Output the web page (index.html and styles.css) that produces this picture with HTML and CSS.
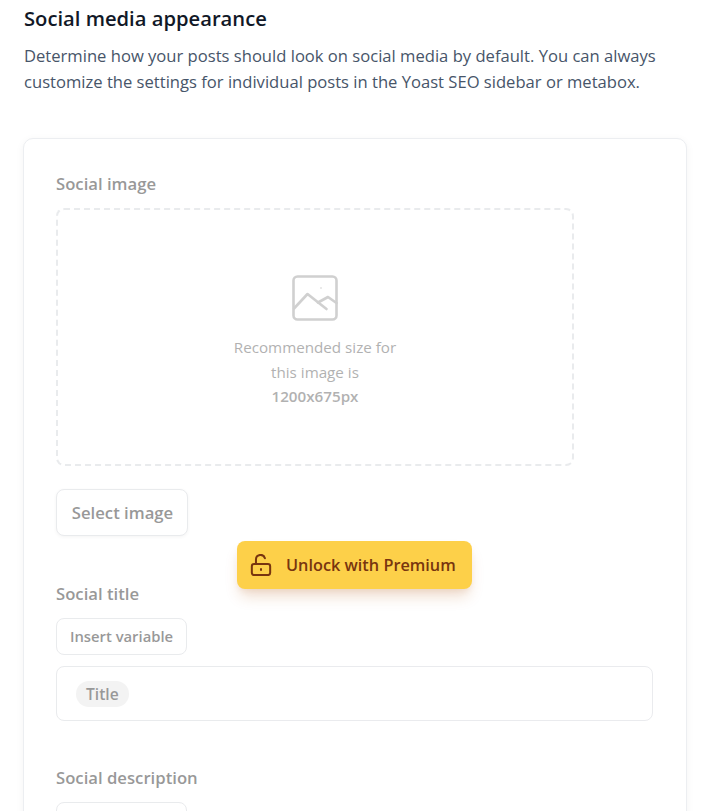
FILE: index.html
```html
<!DOCTYPE html>
<html lang="en">
<head>
<meta charset="utf-8">
<title>Social media appearance</title>
<link rel="stylesheet" href="styles.css">
</head>
<body>
<main class="page">
  <h2 class="title">Social media appearance</h2>
  <p class="intro">Determine how your posts should look on social media by default. You can always customize the settings for individual posts in the Yoast SEO sidebar or metabox.</p>
  <section class="card">
    <div class="dimmed">
      <div class="label label-image">Social image</div>
      <div class="dropzone">
        <svg class="placeholder" viewBox="0 0 46 46" fill="none" stroke="currentColor" stroke-width="2.6" stroke-linecap="round" stroke-linejoin="round">
          <rect x="1.5" y="1.5" width="43" height="43" rx="4"/>
          <path d="M2 33.5 L15.5 19 L34.5 34"/>
          <path d="M26 27.5 L36 22 L44.5 28"/>
          <path d="M29 13h.01" stroke-width="1.6"/>
        </svg>
        <div class="hint">Recommended size for<br>this image is<br><strong>1200x675px</strong></div>
      </div>
      <button class="btn btn-select" type="button">Select image</button>
      <div class="label label-title">Social title</div>
      <button class="btn btn-var" type="button">Insert variable</button>
      <div class="input"><span class="pill">Title</span></div>
      <div class="label label-desc">Social description</div>
      <button class="btn btn-var" type="button" aria-label="Insert variable"></button>
    </div>
    <button class="unlock" type="button">
      <svg class="lock" viewBox="0 0 24 24" fill="none" stroke="currentColor" stroke-width="2.2" stroke-linecap="round" stroke-linejoin="round">
        <rect x="2" y="11" width="20" height="12" rx="2.5"/>
        <path d="M6.5 11V6a5 5 0 0 1 9.8-1.4"/>
        <path d="M12 16.5v1"/>
      </svg>
      <span>Unlock with Premium</span>
    </button>
  </section>
</main>
</body>
</html>
```
FILE: styles.css
```css
html, body {
  margin: 0;
  padding: 0;
  height: 811px;
  overflow: hidden;
  background: #fff;
}
.page {
  padding: 5px 18px 0 24px;
  font-family: "Open Sans", "Noto Sans", sans-serif;
}
.title {
  margin: 0;
  font-size: 20.2px;
  line-height: 26px;
  font-weight: 600;
  color: #111827;
}
.intro {
  margin: 12px 0 0;
  font-size: 16.6px;
  line-height: 26px;
  color: #475569;
  width: 650px;
}
.card {
  position: relative;
  box-sizing: border-box;
  width: 664px;
  margin: 43px 0 0 -1px;
  height: 800px;
  padding: 33px 32px 0;
  border: 1px solid #eceef1;
  border-radius: 10px;
  box-shadow: 0 2px 8px rgba(0, 0, 0, .05);
  background: #fff;
}
.dimmed { opacity: .5; }
.label {
  font-size: 16.7px;
  line-height: 24px;
  font-weight: 560;
  color: #333;
}
.dropzone {
  box-sizing: border-box;
  width: 518px;
  height: 258px;
  margin-top: 12px;
  border: 2px dashed #d5d8dd;
  border-radius: 8px;
  display: flex;
  flex-direction: column;
  align-items: center;
  padding-top: 65px;
}
.placeholder {
  width: 46px;
  height: 46px;
  color: #a3a3a3;
}
.hint {
  margin-top: 14px;
  font-size: 15.2px;
  line-height: 24.5px;
  text-align: center;
  color: #666;
}
.hint strong { font-weight: 600; }
.btn {
  display: block;
  box-sizing: border-box;
  background: #fff;
  border: 1px solid #d5d8dd;
  border-radius: 8px;
  font-family: inherit;
  font-weight: 560;
  color: #333;
  padding: 0 0 2px;
}
.btn-select {
  width: 132px;
  height: 47px;
  margin-top: 23px;
  padding: 0 0 0 1px;
  font-size: 16.7px;
  box-shadow: 0 1px 3px rgba(0, 0, 0, .08);
}
.btn-var {
  width: 131px;
  height: 37px;
  margin-top: 12px;
  font-size: 14.8px;
}
.label-title { margin-top: 46px; }
.label-desc { margin-top: 45px; }
.input {
  box-sizing: border-box;
  width: 597px;
  height: 55px;
  margin-top: 11px;
  padding: 14px 19px;
  border: 1px solid #d5d8dd;
  border-radius: 8px;
}
.pill {
  display: block;
  width: max-content;
  height: 26px;
  padding: 0 10px;
  border-radius: 13px;
  background: #e8e8e8;
  font-size: 15.6px;
  line-height: 26px;
  font-weight: 560;
  color: #333;
}
.unlock {
  position: absolute;
  left: 213px;
  top: 402px;
  width: 235px;
  height: 48px;
  display: flex;
  align-items: center;
  gap: 14px;
  padding: 0 0 0 13px;
  box-sizing: border-box;
  border: 0;
  border-radius: 8px;
  background: #fdd049;
  color: #78350f;
  font-family: inherit;
  font-size: 16.3px;
  font-weight: 560;
  white-space: nowrap;
  box-shadow: 0 10px 15px -3px rgba(180, 83, 9, .2), 0 4px 6px -2px rgba(180, 83, 9, .1);
}
.lock { width: 22px; height: 22px; flex: none; }
```
